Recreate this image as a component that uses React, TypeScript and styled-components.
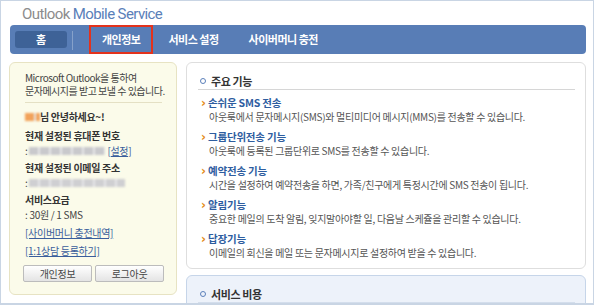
import styled, { createGlobalStyle } from "styled-components";

const GlobalStyle = createGlobalStyle`
  html, body {
    margin: 0;
    padding: 0;
    background: #ffffff;
  }
  * {
    box-sizing: border-box;
  }
`;

const FEATURES = [
  {
    title: "손쉬운 SMS 전송",
    desc: "아웃룩에서 문자메시지(SMS)와 멀티미디어 메시지(MMS)를 전송할 수 있습니다.",
  },
  {
    title: "그룹단위전송 기능",
    desc: "아웃룩에 등록된 그룹단위로 SMS를 전송할 수 있습니다.",
  },
  {
    title: "예약전송 기능",
    desc: "시간을 설정하여 예약전송을 하면, 가족/친구에게 특정시간에 SMS 전송이 됩니다.",
  },
  {
    title: "알림기능",
    desc: "중요한 메일의 도착 알림, 잊지말아야할 일, 다음날 스케쥴을 관리할 수 있습니다.",
  },
  {
    title: "답장기능",
    desc: "이메일의 회신을 메일 또는 문자메시지로 설정하여 받을 수 있습니다.",
  },
];

const App = () => {
  return (
    <>
      <GlobalStyle />
      <Page>
        <Header>
          <Grey>Outlook</Grey> <Blue>Mobile Service</Blue>
        </Header>
        <Nav>
          <HomeBtn>홈</HomeBtn>
          <NavDivider />
          <NavItem $active>개인정보</NavItem>
          <NavItem>서비스 설정</NavItem>
          <NavItem>사이버머니 충전</NavItem>
        </Nav>
        <Body>
          <Side>
            <Intro>
              Microsoft Outlook을 통하여
              <br />
              문자메시지를 받고 보낼 수 있습니다.
            </Intro>
            <SideRule />
            <Greeting>
              <Blur $w={15} $color="#f2a25a" />님 안녕하세요~!
            </Greeting>
            <InfoGroup>
              <InfoLabel>현재 설정된 휴대폰 번호</InfoLabel>
              <InfoValue>
                : <Blur $w={76} $color="#c9c9cc" /> <SideLink>[설정]</SideLink>
              </InfoValue>
            </InfoGroup>
            <InfoGroup>
              <InfoLabel>현재 설정된 이메일 주소</InfoLabel>
              <InfoValue>
                : <Blur $w={96} $color="#cfcfd2" />
              </InfoValue>
            </InfoGroup>
            <InfoGroup>
              <InfoLabel>서비스요금</InfoLabel>
              <InfoValue>: 30원 / 1 SMS</InfoValue>
            </InfoGroup>
            <Links>
              <SideLink>[사이버머니 충전내역]</SideLink>
              <SideLink>[1:1상담 등록하기]</SideLink>
            </Links>
            <Buttons>
              <GreyButton>개인정보</GreyButton>
              <GreyButton>로그아웃</GreyButton>
            </Buttons>
          </Side>
          <Main>
            <Panel>
              <PanelTitle>
                <Ring />
                주요 기능
              </PanelTitle>
              <FeatureList>
                {FEATURES.map((f) => (
                  <Feature key={f.title}>
                    <FeatureTitle>
                      <Chevron>›</Chevron>
                      {f.title}
                    </FeatureTitle>
                    <FeatureDesc>{f.desc}</FeatureDesc>
                  </Feature>
                ))}
              </FeatureList>
            </Panel>
            <Panel $tinted>
              <PanelTitle $tinted>
                <Ring />
                서비스 비용
              </PanelTitle>
            </Panel>
          </Main>
        </Body>
      </Page>
    </>
  );
};

export default App;

const KR = `"Noto Sans CJK KR", "Noto Sans", sans-serif`;

const Page = styled.div`
  width: 594px;
  height: 305px;
  border: 1px solid #c9d5e4;
  border-bottom-width: 2px;
  overflow: hidden;
  font-family: ${KR};
  background: #ffffff;
`;

const Header = styled.div`
  height: 24px;
  padding: 5px 0 0 21px;
  font-family: Roboto, "Open Sans", sans-serif;
  font-size: 15px;
  letter-spacing: -0.6px;
  line-height: 17px;
`;

const Grey = styled.span`
  color: #8c8c8c;
`;

const Blue = styled.span`
  color: #5a80b9;
`;

const Nav = styled.div`
  display: flex;
  align-items: center;
  height: 29px;
  margin: 0 7px 0 9px;
  padding-left: 5px;
  background: #587db6;
  border-radius: 4px;
`;

const HomeBtn = styled.div`
  width: 52px;
  height: 17px;
  border-radius: 3px;
  background: #3e6297;
  color: #ffffff;
  font-size: 11px;
  font-weight: 700;
  line-height: 17px;
  text-align: center;
`;

const NavDivider = styled.div`
  width: 1px;
  height: 19px;
  margin: 2px 16px 0 5px;
  background: rgba(255, 255, 255, 0.28);
`;

const NavItem = styled.div<{ $active?: boolean }>`
  height: 29px;
  line-height: ${(p) => (p.$active ? "25px" : "29px")};
  padding: 0 ${(p) => (p.$active ? "11px" : "15px")};
  border: ${(p) => (p.$active ? "2px solid #e3321c" : "none")};
  color: #ffffff;
  font-size: 11px;
  font-weight: 700;
  letter-spacing: -0.5px;
  white-space: nowrap;
`;

const Body = styled.div`
  display: flex;
  gap: 9px;
  padding: 8px 7px 0 8px;
`;

const Side = styled.div`
  width: 168px;
  height: 233px;
  flex-shrink: 0;
  padding: 8px 4px 0 15px;
  background: #fbfbea;
  border: 1px solid #e7e3c3;
  border-radius: 6px;
  color: #444444;
  font-size: 10px;
  letter-spacing: -0.3px;
`;

const Intro = styled.div`
  line-height: 13px;
  white-space: nowrap;
  letter-spacing: -0.5px;
`;

const SideRule = styled.div`
  height: 1px;
  margin: 5px 10px 6px 0;
  background: #e4e0c4;
`;

const Greeting = styled.div`
  line-height: 15px;
  font-weight: 700;
  color: #333333;
  margin-bottom: 4px;
`;

const InfoGroup = styled.div`
  margin-bottom: 2px;
  line-height: 15px;
`;

const InfoLabel = styled.div`
  font-weight: 700;
  color: #333333;
`;

const InfoValue = styled.div`
  white-space: nowrap;
`;

const Blur = styled.span<{ $w: number; $color: string }>`
  display: inline-block;
  vertical-align: middle;
  width: ${(p) => p.$w}px;
  height: 8px;
  margin-top: -2px;
  background: repeating-linear-gradient(
    90deg,
    ${(p) => p.$color} 0 9px,
    #e6e6e8 9px 11px
  );
  filter: blur(0.8px);
`;

const Links = styled.div`
  display: flex;
  flex-direction: column;
  gap: 3px;
  margin-top: 3px;
  line-height: 15px;
`;

const SideLink = styled.span`
  color: #3a5e9c;
  text-decoration: underline;
`;

const Buttons = styled.div`
  display: flex;
  gap: 3px;
  margin-top: 7px;
  margin-left: -2px;
`;

const GreyButton = styled.div`
  width: 69px;
  height: 17px;
  border: 1px solid #bcbcbc;
  border-radius: 2px;
  background: linear-gradient(#ffffff, #e4e4e4);
  color: #444444;
  font-size: 10px;
  line-height: 15px;
  text-align: center;
`;

const Main = styled.div`
  flex: 1;
  display: flex;
  flex-direction: column;
  gap: 6px;
`;

const Panel = styled.div<{ $tinted?: boolean }>`
  height: ${(p) => (p.$tinted ? "60px" : "207px")};
  padding: 10px 10px 0 11px;
  border: 1px solid ${(p) => (p.$tinted ? "#c6d5e9" : "#dedede")};
  border-radius: 6px;
  background: ${(p) => (p.$tinted ? "#edf2fa" : "#ffffff")};
`;

const PanelTitle = styled.div<{ $tinted?: boolean }>`
  display: flex;
  align-items: center;
  gap: 5px;
  height: 17px;
  padding-left: 2px;
  border-bottom: 1px solid ${(p) => (p.$tinted ? "#d4deec" : "#d6d6d6")};
  color: #333333;
  font-size: 11px;
  font-weight: 700;
  letter-spacing: -0.4px;
  line-height: 14px;
`;

const Ring = styled.span`
  width: 6px;
  height: 6px;
  border: 1.5px solid #5b80ba;
  border-radius: 50%;
`;

const FeatureList = styled.div`
  display: flex;
  flex-direction: column;
  gap: 6px;
  padding: 6px 0 0 3px;
`;

const Feature = styled.div`
  line-height: 14px;
`;

const FeatureTitle = styled.div`
  display: flex;
  align-items: center;
  color: #2e5d9f;
  font-size: 10.5px;
  font-weight: 700;
  letter-spacing: -0.2px;
`;

const Chevron = styled.span`
  width: 7px;
  color: #e48a18;
  font-size: 12px;
  font-weight: 700;
  font-family: "DejaVu Sans", sans-serif;
  line-height: 12px;
`;

const FeatureDesc = styled.div`
  padding-left: 8px;
  color: #555555;
  font-size: 10px;
  letter-spacing: -0.3px;
  white-space: nowrap;
`;
